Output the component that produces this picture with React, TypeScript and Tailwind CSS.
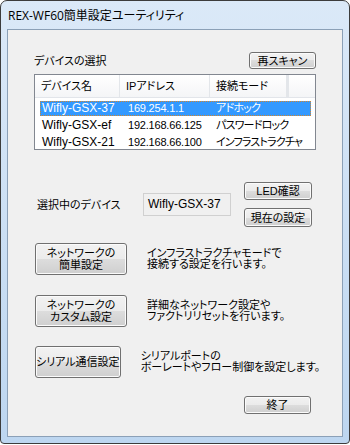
const btn =
  "flex items-center justify-center whitespace-nowrap rounded-[3px] border border-[#707070] bg-[linear-gradient(to_bottom,#f2f2f2_0%,#ebebeb_50%,#dddddd_50%,#cfcfcf_100%)] shadow-[inset_0_0_0_1px_#fbfbfb] text-[11px] leading-[12px] text-black";

const devices = [
  { name: "Wifly-GSX-37", ip: "169.254.1.1", mode: "アドホック" },
  { name: "Wifly-GSX-ef", ip: "192.168.66.125", mode: "パスワードロック" },
  { name: "Wifly-GSX-21", ip: "192.168.66.100", mode: "インフラストラクチャ" },
];

const actions = [
  { label: ["ネットワークの", "簡単設定"], desc: ["インフラストラクチャモードで", "接続する設定を行います。"], mt: "mt-[16px]" },
  { label: ["ネットワークの", "カスタム設定"], desc: ["詳細なネットワーク設定や", "ファクトリリセットを行います。"], mt: "mt-[20px]" },
  { label: ["シリアル通信設定"], desc: ["シリアルポートの", "ボーレートやフロー制御を設定します。"], mt: "mt-[19px]" },
];

export default function App() {
  return (
    <div className="h-[445px] w-[350px] bg-white font-['Liberation_Sans','Noto_Sans_CJK_JP',sans-serif] text-[11px] text-black [font-feature-settings:'palt']">
      <div className="flex h-[444px] flex-col rounded-t-[7px] rounded-b-[4px] border border-[#3c3c3c] bg-gradient-to-b from-[#dbe9f8] to-[#bdd6f0]">
        {/* title bar */}
        <div className="flex h-[28px] items-center pl-[7px] pt-[1px] font-['Open_Sans','Noto_Sans_CJK_JP',sans-serif] text-[12px]">
          REX-WF60簡単設定ユーティリティ
        </div>

        <div className="mx-[6px] flex h-[408px] flex-col border border-[#8ba0b7] bg-[#f0f0f0] px-[26px]">
          {/* device selection */}
          <div className="mt-[22px] flex h-[17px] items-center justify-between">
            <span className="leading-[12px]">デバイスの選択</span>
            <button className={`${btn} h-[17px] w-[67px]`}>再スキャン</button>
          </div>

          <div className="mt-[5px] h-[76px] overflow-hidden border border-[#828790] bg-white">
            <div className="grid h-[23px] grid-cols-[85px_90px_79px_1fr] border-b border-[#e2e5ea] bg-gradient-to-b from-white to-[#f4f5f7]">
              {["デバイス名", "IPアドレス", "接続モード", ""].map((h, i) => (
                <div key={i} className={`flex items-center pl-[6px] ${i < 3 ? "border-r border-[#e3e6ea]" : ""} ${i === 2 ? "border-r-[3px]" : ""}`}>
                  {h}
                </div>
              ))}
            </div>
            <div className="pt-[3px]">
              {devices.map((d, i) => (
                <div
                  key={d.name}
                  className={`mb-[2px] ml-[5px] grid h-[15px] w-[271px] grid-cols-[80px_90px_79px_22px] items-center leading-[13px] ${
                    i === 0 ? "border border-dotted border-[#d4862c] bg-[#3399ff] text-white" : "border border-transparent"
                  }`}
                >
                  <span className="pl-[1px] text-[12px]">{d.name}</span>
                  <span className="pl-[7px] tracking-[-0.2px]">{d.ip}</span>
                  <span className="whitespace-nowrap pl-[5px] tracking-[-0.8px]">{d.mode}</span>
                  <span />
                </div>
              ))}
            </div>
          </div>

          {/* current device */}
          <div className="mt-[32px] flex items-center pl-[3px]">
            <span className="w-[106px] leading-[12px]">選択中のデバイス</span>
            <div className="h-[23px] w-[88px] border border-[#d0d0d0] bg-[#f0f0f0] pl-[4px] pt-[4px] text-[12px] leading-[12px]">
              Wifly-GSX-37
            </div>
            <div className="ml-auto mr-[4px] flex flex-col gap-[8px]">
              <button className={`${btn} h-[18px] w-[68px]`}>LED確認</button>
              <button className={`${btn} h-[19px] w-[68px]`}>現在の設定</button>
            </div>
          </div>

          {/* actions */}
          {actions.map((a) => (
            <div key={a.desc[0]} className={`${a.mt} flex items-center pl-[1px]`}>
              <button className={`${btn} h-[32px] w-[92px] flex-col leading-[11px]`}>
                {a.label.map((l) => (
                  <span key={l}>{l}</span>
                ))}
              </button>
              <div className="ml-[20px] flex flex-col whitespace-nowrap leading-[11px]">
                {a.desc.map((l) => (
                  <span key={l}>{l}</span>
                ))}
              </div>
            </div>
          ))}

          <div className="mt-[18px] flex justify-end pr-[5px]">
            <button className={`${btn} h-[18px] w-[67px]`}>終了</button>
          </div>
        </div>
      </div>
    </div>
  );
}
